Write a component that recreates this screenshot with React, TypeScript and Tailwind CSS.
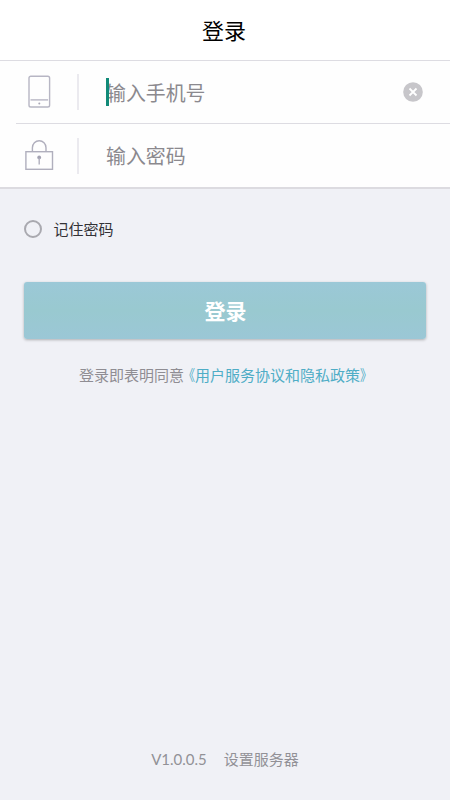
import { useState } from 'react'

function PhoneIcon(): React.ReactElement {
  return (
    <svg width="24" height="34" viewBox="0 0 24 34" fill="none" stroke="#b7b6c4" strokeWidth="1.4">
      <rect x="2" y="1.2" width="20.6" height="30.8" rx="1.8" />
      <path d="M3.5 24.9h17.6" />
      <circle cx="12.3" cy="28.4" r="1" fill="#a9a8b6" stroke="none" />
    </svg>
  )
}

function LockIcon(): React.ReactElement {
  return (
    <svg width="30" height="32" viewBox="0 0 30 32" fill="none" stroke="#b0afbd" strokeWidth="1.4">
      <rect x="1.9" y="11.7" width="26.6" height="17.6" />
      <path d="M8.4 11.5V7.8a6.8 7 0 0 1 13.6 0v3.7" />
      <circle cx="15.2" cy="17.4" r="1.9" fill="#a3a2b2" stroke="none" />
      <path d="M15.2 18v6.4" />
    </svg>
  )
}

function ClearIcon(): React.ReactElement {
  return (
    <svg width="20" height="20" viewBox="0 0 20 20">
      <circle cx="10" cy="10" r="9.8" fill="#c7c6ca" />
      <path d="M6.5 6.5l7 7M13.5 6.5l-7 7" stroke="#fff" strokeWidth="1.8" />
    </svg>
  )
}

const inputClass =
  'w-full bg-transparent text-[19.9px] leading-7 font-normal text-gray-900 caret-[#118a78] outline-none placeholder:text-[#8b898e]'

export default function App(): React.ReactElement {
  const [phone, setPhone] = useState('')
  const [password, setPassword] = useState('')
  const [remember, setRemember] = useState(false)

  return (
    <div className="flex h-[800px] w-[450px] flex-col bg-[#f0f1f6] font-['Noto_Sans_CJK_SC',sans-serif]">
      <header className="flex h-[61px] items-center justify-center border-b border-[#dddce2] bg-white pr-0.5 pb-0.5">
        <h1 className="text-[22px] leading-8 font-normal text-black">登录</h1>
      </header>

      <div className="border-b-2 border-[#dcdbe0] bg-[#fefefe]">
        <div className="flex h-[62px] items-center">
          <div className="flex w-[77px] shrink-0 justify-center pl-px">
            <PhoneIcon />
          </div>
          <div className="h-9 w-0.5 bg-[#ebeaef]" />
          <div className="relative ml-[27px] flex-1 pt-px">
            <input
              className={inputClass}
              placeholder="输入手机号"
              value={phone}
              onChange={(e) => setPhone(e.target.value)}
            />
            {phone === '' && <span className="absolute top-0 left-0 h-7 w-[2.5px] bg-[#118a78]" />}
          </div>
          <button type="button" className="mr-[27px]" aria-label="清除" onClick={() => setPhone('')}>
            <ClearIcon />
          </button>
        </div>
        <div className="ml-4 h-px bg-[#dddce2]" />
        <div className="flex h-[63px] items-center">
          <div className="flex w-[77px] shrink-0 justify-center pl-px">
            <LockIcon />
          </div>
          <div className="h-9 w-0.5 bg-[#ebeaef]" />
          <div className="ml-[27px] flex-1 pt-px">
            <input
              type="password"
              className={inputClass}
              placeholder="输入密码"
              value={password}
              onChange={(e) => setPassword(e.target.value)}
            />
          </div>
        </div>
      </div>

      <button
        type="button"
        onClick={() => setRemember((v) => !v)}
        className="mt-7 ml-[23.5px] flex items-center gap-3 self-start"
      >
        <span className="flex size-[18px] items-center justify-center rounded-full border-2 border-[#a9a9af]">
          {remember && <span className="size-2 rounded-full bg-[#118a78]" />}
        </span>
        <span className="text-[15px] leading-6 text-[#333236]">记住密码</span>
      </button>

      <button
        type="button"
        className="mx-6 mt-[41px] h-[57px] rounded-[3px] bg-linear-to-b from-[#9bc8d7] via-[#99c9d0] to-[#9bc7d6] pt-px pl-px text-[21px] font-bold text-white shadow-[0_1px_3px_rgba(0,0,0,0.28)]"
      >
        登录
      </button>

      <p className="mt-6 ml-[79px] flex text-[15px] leading-6 whitespace-nowrap text-[#8f8d93]">
        <span>登录即表明同意</span>
        <a className="flex text-[#4fadc6]">
          <span className="-ml-[4px] w-[15px] origin-right scale-x-80">《</span>
          <span>用户服务协议和隐私政策</span>
          <span className="w-[15px] origin-left scale-x-80">》</span>
        </a>
      </p>

      <footer className="mt-auto mb-[29px] flex justify-center gap-[17px] text-[15px] leading-6 text-[#929197]">
        <span className="font-[Lato,sans-serif]">V1.0.0.5</span>
        <span>设置服务器</span>
      </footer>
    </div>
  )
}
